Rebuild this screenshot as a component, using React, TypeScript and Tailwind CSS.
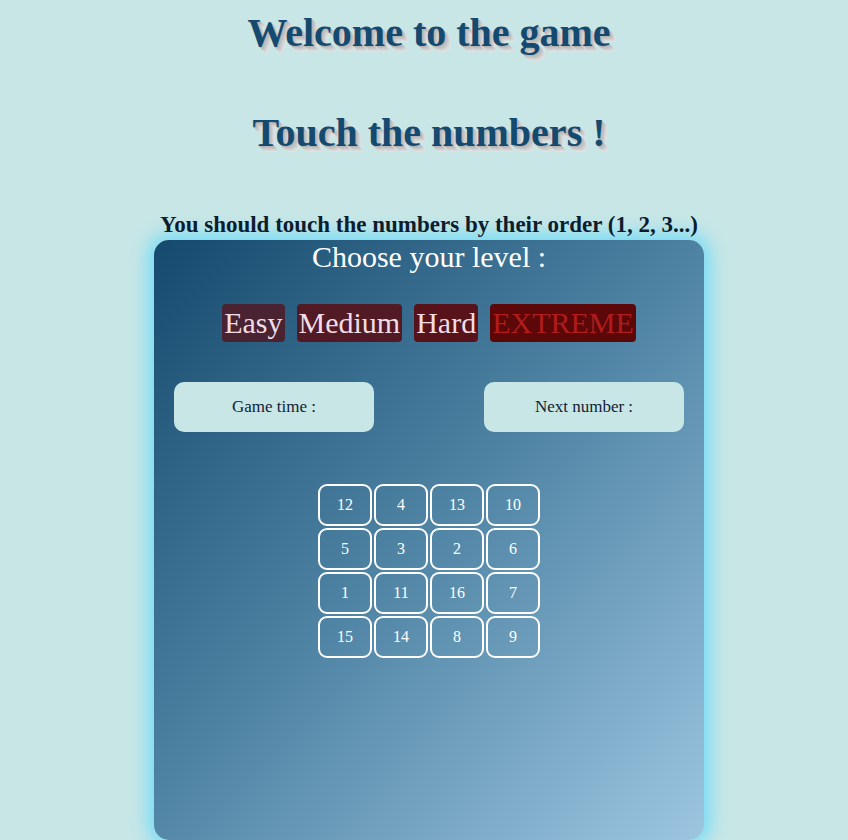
import React from 'react'

const levels = [
    { label: 'Easy', cls: 'bg-[#4a2332] text-[#f0dde6]' },
    { label: 'Medium', cls: 'bg-[#521a24] text-[#f0dde6]' },
    { label: 'Hard', cls: 'bg-[#58121a] text-[#f0dde6]' },
    { label: 'EXTREME', cls: 'bg-[#5c0808] text-[#b01c1c]' },
]

const board = [12, 4, 13, 10, 5, 3, 2, 6, 1, 11, 16, 7, 15, 14, 8, 9]

const titleShadow =
    '[text-shadow:1px_1px_0_#b5b5b5,2px_2px_0_#bebebe,3px_3px_0_#c7c7c7,4px_4px_0_#d0d0d0,5px_5px_0_#d9d9d9,6px_6px_1px_#e2e2e2]'

export default function App() {
    return (
        <div className="min-h-screen bg-[#c8e6e6] flex flex-col items-center pl-[10px]" style={{ fontFamily: '"Liberation Serif", "Times New Roman", serif' }}>

            {/* ── HEADINGS ── */}
            <h1 className={`mt-[10px] text-[40px] leading-[46px] font-bold text-[#154a70] ${titleShadow}`}>
                Welcome to the game
            </h1>
            <h1 className={`mt-[54px] text-[40px] leading-[46px] font-bold text-[#154a70] ${titleShadow}`}>
                Touch the numbers !
            </h1>
            {/* sits above the panel glow */}
            <p className="relative z-10 mt-[56px] text-[23px] leading-[26px] font-bold text-[#0d1d2e]">
                You should touch the numbers by their order (1, 2, 3...)
            </p>

            {/* ── GAME PANEL ── */}
            <div className="mt-[2px] w-[550px] h-[600px] rounded-[15px] bg-[linear-gradient(135deg,#154a6e_0%,#4a7fa0_45%,#9cc6e0_100%)] shadow-[0_0_18px_6px_#74dcf6] flex flex-col items-center">
                <h2 className="text-[30px] leading-[34px] text-white">Choose your level :</h2>

                <div className="mt-[30px] flex gap-3">
                    {levels.map(l => (
                        <button key={l.label} className={`px-[2px] rounded-[4px] text-[30px] leading-[38px] ${l.cls}`}>
                            {l.label}
                        </button>
                    ))}
                </div>

                <div className="mt-[40px] w-full px-[20px] flex justify-between">
                    <div className="w-[200px] h-[50px] rounded-[10px] bg-[#c8e6e6] flex items-center justify-center text-[17px] text-[#0f2236]">
                        Game time :
                    </div>
                    <div className="w-[200px] h-[50px] rounded-[10px] bg-[#c8e6e6] flex items-center justify-center text-[17px] text-[#0f2236]">
                        Next number :
                    </div>
                </div>

                <div className="mt-[52px] grid grid-cols-4 gap-[2px]">
                    {board.map(n => (
                        <div key={n} className="w-[54px] h-[42px] border-2 border-white rounded-[9px] flex items-center justify-center text-[16px] text-white">
                            {n}
                        </div>
                    ))}
                </div>
            </div>
        </div>
    )
}
